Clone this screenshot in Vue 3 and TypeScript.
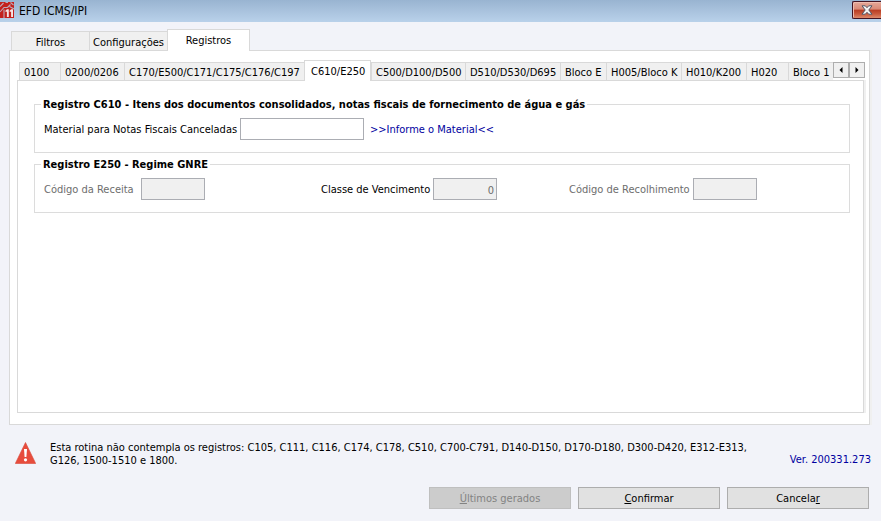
<script setup lang="ts">
import { ref } from 'vue'

interface Tab {
  label: string
  width: number
}

const mainTabs: Tab[] = [
  { label: 'Filtros', width: 78 },
  { label: 'Configurações', width: 78 },
  { label: 'Registros', width: 83 },
]
const recordTabs: Tab[] = [
  { label: '0100', width: 41 },
  { label: '0200/0206', width: 64 },
  { label: 'C170/E500/C171/C175/C176/C197', width: 180 },
  { label: 'C610/E250', width: 67 },
  { label: 'C500/D100/D500', width: 94 },
  { label: 'D510/D530/D695', width: 95 },
  { label: 'Bloco E', width: 46 },
  { label: 'H005/Bloco K', width: 75 },
  { label: 'H010/K200', width: 65 },
  { label: 'H020', width: 42 },
  { label: 'Bloco 1', width: 48 },
]
const activeMain = ref('Registros')
const activeRecord = ref('C610/E250')
const material = ref('')
const receita = ref('')
const vencimento = ref('0')
const recolhimento = ref('')
</script>

<template>
  <div class="window">
    <header class="titlebar">
      <svg class="logo" viewBox="0 0 14 16" aria-hidden="true">
        <rect width="14" height="16" fill="#c3211d" />
        <path d="M0 4.5 L3.5 1 M0 10 L4 5.5 H7.5 L10.5 2.5 M5.5 .5 H8 M9.5 4.5 L14 7 M4 7.5 V16 M10.5 .5 L13.5 3" fill="none" stroke="#bcaabb" stroke-width="1.1" />
        <path d="M5.4 8.8 L7 7.2 H8.8 V15 H6.9 V9.8 H5.4 Z M9.6 8.8 L11.2 7.2 H13 V15 H11.1 V9.8 H9.6 Z" fill="#f6e3e3" />
      </svg>
      <h1 class="title">EFD ICMS/IPI</h1>
      <button class="close" type="button" aria-label="Fechar">
        <svg viewBox="0 0 12 10" aria-hidden="true">
          <path d="M1 .8 H4.3 L6 2.7 L7.7 .8 H11 L7.8 5 L11 9.2 H7.7 L6 7.3 L4.3 9.2 H1 L4.2 5 Z" fill="#f4f4f4" stroke="#535666" stroke-width="1" />
        </svg>
      </button>
    </header>

    <main class="content">
      <div class="tabs main-tabs" role="tablist">
        <button
          v-for="tab in mainTabs"
          :key="tab.label"
          class="tab"
          :class="{ active: tab.label === activeMain }"
          :style="{ width: tab.width + 'px' }"
          type="button"
          role="tab"
          :aria-selected="tab.label === activeMain"
          @click="activeMain = tab.label"
        >{{ tab.label }}</button>
      </div>

      <section class="panel outer">
        <div class="strip">
          <div class="tabs record-tabs" role="tablist">
            <button
              v-for="tab in recordTabs"
              :key="tab.label"
              class="tab"
              :class="{ active: tab.label === activeRecord }"
              :style="{ width: tab.width + 'px' }"
              type="button"
              role="tab"
              :aria-selected="tab.label === activeRecord"
              @click="activeRecord = tab.label"
            >{{ tab.label }}</button>
          </div>
          <div class="scroller">
            <button type="button" aria-label="Anterior">
              <svg viewBox="0 0 4 6" aria-hidden="true"><path d="M3.5 0 V6 L.5 3 Z" /></svg>
            </button>
            <button type="button" aria-label="Próximo">
              <svg viewBox="0 0 4 6" aria-hidden="true"><path d="M.5 0 V6 L3.5 3 Z" /></svg>
            </button>
          </div>
        </div>

        <div class="panel inner">
          <fieldset class="group">
            <legend>Registro C610 - Itens dos documentos consolidados, notas fiscais de fornecimento de água e gás</legend>
            <div class="material-row">
              <label for="material">Material para Notas Fiscais Canceladas</label>
              <input id="material" v-model="material" class="box wide" type="text" />
              <a class="hint" href="#material">&gt;&gt;Informe o Material&lt;&lt;</a>
            </div>
          </fieldset>
          <fieldset class="group">
            <legend>Registro E250 - Regime GNRE</legend>
            <div class="regime-row">
              <label class="muted" for="receita">Código da Receita</label>
              <input id="receita" v-model="receita" class="box" type="text" disabled />
              <label for="vencimento">Classe de Vencimento</label>
              <input id="vencimento" v-model="vencimento" class="box number" type="text" disabled />
              <label class="muted" for="recolhimento">Código de Recolhimento</label>
              <input id="recolhimento" v-model="recolhimento" class="box" type="text" disabled />
            </div>
          </fieldset>
        </div>
      </section>
    </main>

    <footer class="footer">
      <div class="notice">
        <svg class="warning" viewBox="0 0 21 22" aria-hidden="true">
          <path d="M10.5 .5 L20.7 21.5 H.3 Z" fill="#e74c3c" stroke="#d9483b" stroke-width=".6" stroke-linejoin="round" />
          <path d="M9 7 H12 L11.4 15 H9.6 Z" fill="#fff" />
          <circle cx="10.5" cy="17.8" r="1.6" fill="#fff" />
        </svg>
        <p class="message">Esta rotina não contempla os registros: C105, C111, C116, C174, C178, C510, C700-C791, D140-D150, D170-D180, D300-D420, E312-E313,<br />G126, 1500-1510 e 1800.</p>
        <span class="version">Ver. 200331.273</span>
      </div>
      <div class="actions">
        <button class="action" type="button" disabled><u>Ú</u>ltimos gerados</button>
        <button class="action" type="button"><u>C</u>onfirmar</button>
        <button class="action" type="button">Cancela<u>r</u></button>
      </div>
    </footer>
  </div>
</template>

<style>
body {
  margin: 0;
  background: #f2f3f9;
}
</style>

<style scoped>
.window {
  box-sizing: border-box;
  display: flex;
  flex-direction: column;
  min-height: 100vh;
  padding-bottom: 12px;
  background: #f2f3f9;
  color: #000;
  font: 11px/13px Tahoma, "DejaVu Sans Condensed", "Noto Sans", sans-serif;
}
button,
input {
  box-sizing: border-box;
  margin: 0;
  padding: 0;
  color: inherit;
  font: inherit;
}
.titlebar {
  display: flex;
  align-items: center;
  height: 22px;
  background: linear-gradient(#99b4d1, #b9d1ea);
}
.logo {
  align-self: flex-start;
  width: 14px;
  height: 16px;
  margin-top: 2px;
}
.title {
  flex: 1;
  margin: 0 0 0 5px;
  font-size: 12px;
  font-weight: 400;
  line-height: 20px;
}
.close {
  display: flex;
  align-items: center;
  justify-content: center;
  align-self: flex-start;
  width: 29px;
  height: 18px;
  margin-top: 1px;
  border: 1px solid #431422;
  border-right: 0;
  border-radius: 2px 0 0 2px;
  background: linear-gradient(#e5a899, #d98976 45%, #b83c23 50%, #c9593c 75%, #dd8a6c);
  box-shadow: inset 1px 1px #eebcb0;
}
.close svg {
  width: 12px;
  height: 10px;
}
.content {
  display: flex;
  flex: 1;
  flex-direction: column;
  padding: 8px 11px 0 9px;
}
.tabs {
  display: flex;
  align-items: flex-end;
}
.tab {
  flex: none;
  height: 19px;
  padding-top: 2px;
  border: 1px solid #d9d9d9;
  border-right: 0;
  border-bottom: 0;
  background: #f0f0f0;
  white-space: nowrap;
}
.tab.active {
  position: relative;
  height: 22px;
  margin-bottom: -1px;
  padding-bottom: 2px;
  border-right: 1px solid #d9d9d9;
  background: #fff;
}
.main-tabs {
  height: 20px;
  padding-left: 2px;
}
.panel {
  display: flex;
  flex: 1;
  flex-direction: column;
  border: 1px solid #d9d9d9;
  background: #fff;
  box-shadow: 2px 0 #f0f0f0;
}
.outer {
  padding: 9px 4px 11px 7px;
}
.strip {
  display: flex;
  height: 20px;
  padding-left: 2px;
}
.record-tabs {
  flex: 1;
  min-width: 0;
  overflow: hidden;
  margin-bottom: -1px;
  padding-bottom: 1px;
  position: relative;
}
.record-tabs .tab {
  height: 18px;
  padding-left: 4px;
  text-align: left;
}
.record-tabs .tab.active {
  height: 21px;
  padding-left: 6px;
}
.scroller {
  display: flex;
  align-self: center;
}
.scroller button {
  display: flex;
  align-items: center;
  justify-content: center;
  width: 16px;
  height: 16px;
  border: 1px solid #adadad;
  background: #f0f0f0;
}
.scroller svg {
  width: 4px;
  height: 6px;
}
.inner {
  gap: 5px;
  margin-right: 1px;
  padding: 17px 13px 16px 16px;
}
.group {
  min-width: 0;
  margin: 0;
  padding: 0 9px 12px;
  border: 1px solid #dcdcdc;
}
.group legend {
  margin-left: -3px;
  padding: 0 2px;
  font-weight: 700;
}
.material-row,
.regime-row {
  display: grid;
  align-items: center;
  justify-content: start;
  padding-top: 7px;
  white-space: nowrap;
}
.material-row {
  grid-template-columns: 196px 124px auto;
}
.regime-row {
  grid-template-columns: 97px 180px 112px 136px 124px 64px;
}
.box {
  width: 64px;
  height: 22px;
  padding: 2px 2px 0;
  border: 1px solid #abadb3;
  background: #fff;
}
.box.wide {
  width: 124px;
}
.box:disabled {
  background: #f0f0f0;
  color: #6d6d6d;
}
.number {
  text-align: right;
}
.muted {
  color: #6d6d6d;
}
.hint {
  margin-left: 6px;
  color: #0000a0;
  text-decoration: none;
}
.footer {
  padding: 16px 12px 0 15px;
}
.notice {
  display: flex;
  align-items: flex-start;
}
.warning {
  flex: none;
  width: 21px;
  height: 22px;
  margin-top: 1px;
}
.message {
  flex: 1;
  margin: 0 0 0 14px;
  white-space: nowrap;
}
.version {
  margin: 12px -2px 0 0;
  color: #0000a0;
}
.actions {
  display: flex;
  justify-content: flex-end;
  gap: 7px;
  margin-top: 20px;
}
.action {
  width: 142px;
  height: 22px;
  border: 1px solid #adadad;
  background: #e1e1e1;
}
.action:disabled {
  border-color: #bfbfbf;
  background: #ccc;
  color: #838383;
}
</style>
